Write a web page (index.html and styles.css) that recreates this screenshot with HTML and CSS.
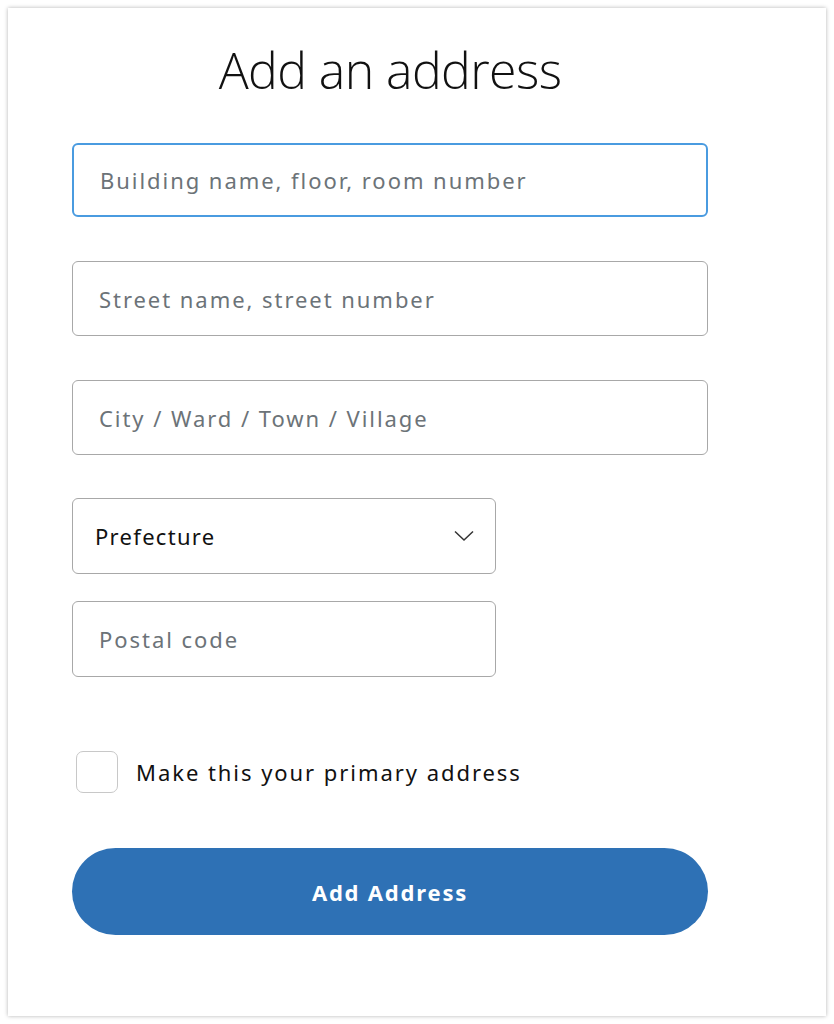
FILE: index.html
```html
<!DOCTYPE html>
<html lang="en">
<head>
  <meta charset="UTF-8" />
  <title>Add an address</title>
  <link rel="stylesheet" href="styles.css">
</head>
<body>
  <div class="card">
    <h1 class="title">Add an address</h1>

    <form class="address-form">
      <input type="text" class="field field-focus" placeholder="Building name, floor, room number" />
      <input type="text" class="field" placeholder="Street name, street number" />
      <input type="text" class="field field-last" placeholder="City / Ward / Town / Village" />

      <div class="select-wrap">
        <span class="select-label">Prefecture</span>
        <svg class="chevron" width="20" height="12" viewBox="0 0 20 12" fill="none">
          <path d="M1 1.5 L10 10 L19 1.5" stroke="#333" stroke-width="1.5" />
        </svg>
      </div>

      <input type="text" class="field field-short" placeholder="Postal code" />

      <label class="check-row">
        <span class="checkbox"></span>
        Make this your primary address
      </label>

      <button type="button" class="btn">Add Address</button>
    </form>
  </div>
</body>
</html>
```

FILE: styles.css
```css
* {
  box-sizing: border-box;
  margin: 0;
  padding: 0;
}

body {
  background: #fff;
  padding: 8px;
  font-family: 'Noto Sans', 'Open Sans', sans-serif;
}

.card {
  height: 1008px;
  background: #fff;
  box-shadow: 0 0 4px rgba(0, 0, 0, 0.3);
  padding: 32px 0 0 64px;
}

.title {
  width: 636px;
  text-align: center;
  font-family: 'Open Sans', sans-serif;
  font-weight: 300;
  font-size: 50px;
  line-height: 60px;
  letter-spacing: -0.6px;
  color: #111;
  margin-bottom: 43px;
}

.address-form {
  display: flex;
  flex-direction: column;
  width: 636px;
}

.field {
  height: 75px;
  border: 1.5px solid #a8a8a8;
  border-radius: 6px;
  padding: 0 26px;
  font-family: 'Noto Sans', sans-serif;
  font-size: 22px;
  color: #111;
  margin-bottom: 44px;
  outline: none;
}

.field::placeholder {
  color: #6c7378;
  letter-spacing: 1.95px;
}

.field-focus {
  height: 74px;
  border: 2px solid #4a9be0;
}

.field-last {
  margin-bottom: 43px;
}

.field-short {
  width: 424px;
  height: 76px;
  margin-bottom: 74px;
}

.select-wrap {
  width: 424px;
  height: 76px;
  border: 1.5px solid #a8a8a8;
  border-radius: 6px;
  display: flex;
  align-items: center;
  justify-content: space-between;
  padding: 0 21px 0 22px;
  margin-bottom: 27px;
}

.select-label {
  font-size: 22px;
  color: #111;
  letter-spacing: 1.3px;
}

.check-row {
  display: flex;
  align-items: center;
  gap: 18px;
  padding-left: 4px;
  font-size: 22px;
  color: #111;
  letter-spacing: 1.95px;
  margin-bottom: 55px;
}

.checkbox {
  width: 42px;
  height: 42px;
  border: 1.5px solid #c8c8c8;
  border-radius: 7px;
}

.btn {
  height: 87px;
  border: none;
  border-radius: 44px;
  background: #2e71b5;
  color: #fff;
  font-family: 'Noto Sans', sans-serif;
  font-size: 22px;
  font-weight: 700;
  letter-spacing: 1.8px;
}
```
